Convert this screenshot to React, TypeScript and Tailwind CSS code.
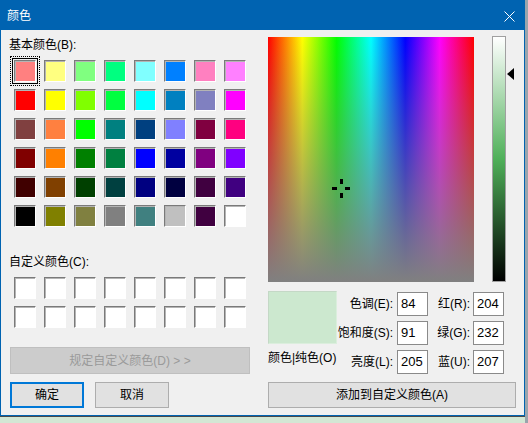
import React from 'react';

const basicColors = [
  ['#FF8080', '#FFFF80', '#80FF80', '#00FF80', '#80FFFF', '#0080FF', '#FF80C0', '#FF80FF'],
  ['#FF0000', '#FFFF00', '#80FF00', '#00FF40', '#00FFFF', '#0080C0', '#8080C0', '#FF00FF'],
  ['#804040', '#FF8040', '#00FF00', '#008080', '#004080', '#8080FF', '#800040', '#FF0080'],
  ['#800000', '#FF8000', '#008000', '#008040', '#0000FF', '#0000A0', '#800080', '#8000FF'],
  ['#400000', '#804000', '#004000', '#004040', '#000080', '#000040', '#400040', '#400080'],
  ['#000000', '#808000', '#808040', '#808080', '#408080', '#C0C0C0', '#400040', '#FFFFFF'],
];

const Swatch: React.FC<{ color: string; selected?: boolean }> = ({ color, selected }) => (
  <div className="relative w-[22px] h-[22px]">
    {selected && (
      <>
        <span className="absolute -inset-[4px] border border-dotted border-black" />
        <span className="absolute -inset-[2px] border border-black" />
      </>
    )}
    <div
      className="w-full h-full border border-t-[#7a7a7a] border-l-[#7a7a7a] border-b-white border-r-white shadow-[inset_1px_1px_0_#b4b4b4]"
      style={{ backgroundColor: color }}
    />
  </div>
);

const Field: React.FC<{ label: string; value: string; labelW: string; gap: string }> = ({ label, value, labelW, gap }) => (
  <div className="flex items-center">
    <span className={`${labelW} text-right text-[12px] leading-[16px]`}>{label}</span>
    <div className={`${gap} w-[31px] h-[24px] bg-white border border-[#8a8a8a] text-[13px] leading-[22px] pl-[3px]`}>{value}</div>
  </div>
);

export default function App() {
  return (
    <div className="w-[528px] h-[423px] bg-[#9aa4ac] overflow-hidden font-['Liberation_Sans','Noto_Sans_CJK_SC',sans-serif] text-black">
      <div className="w-[525px] h-[416px] border border-[#0063b1] bg-[#f0f0f0] flex flex-col">
        {/* title bar */}
        <div className="h-[29px] shrink-0 bg-[#0063b1] flex items-center justify-between pl-[6px] pr-[9px]">
          <span className="text-white text-[12px]">颜色</span>
          <svg width="11" height="11" viewBox="0 0 11 11" className="mt-[1px]">
            <path d="M0.5 0.5 L10.5 10.5 M10.5 0.5 L0.5 10.5" stroke="white" strokeWidth="1" fill="none" />
          </svg>
        </div>

        <div className="flex pl-[8px]">
          {/* left column */}
          <div className="w-[241px] flex flex-col">
            <div className="mt-[7px] h-[17px] text-[12px] leading-[17px]">基本颜色(B):</div>
            <div className="mt-[6px] ml-[5px] grid grid-cols-[repeat(8,22px)] gap-x-[8px] gap-y-[7px]">
              {basicColors.flat().map((c, i) => (
                <Swatch key={i} color={c} selected={i === 0} />
              ))}
            </div>
            <div className="mt-[27px] h-[17px] text-[12px] leading-[17px]">自定义颜色(C):</div>
            <div className="mt-[6px] ml-[5px] grid grid-cols-[repeat(8,22px)] gap-x-[8px] gap-y-[7px]">
              {Array.from({ length: 16 }).map((_, i) => (
                <Swatch key={i} color="#FFFFFF" />
              ))}
            </div>
            <div className="mt-[19px] ml-[1px] w-[240px] h-[27px] bg-[#cccccc] border border-[#bfbfbf] flex items-center justify-center text-[12px] text-[#9a9a9a]">
              规定自定义颜色(D) &gt; &gt;
            </div>
            <div className="mt-[8px] ml-[1px] flex gap-[11px]">
              <button className="w-[74px] h-[26px] bg-[#e1e1e1] border-2 border-[#0078d7] text-[12px]">确定</button>
              <button className="w-[74px] h-[26px] bg-[#e1e1e1] border border-[#adadad] text-[12px]">取消</button>
            </div>
          </div>

          {/* right column */}
          <div className="ml-[18px] flex flex-col pt-[6px]">
            <div className="flex items-start">
              <div className="relative mt-[1px] w-[206px] h-[245px] bg-[linear-gradient(to_bottom,rgba(128,128,128,0),#808080),linear-gradient(to_right,#f00,#ff0,#0f0,#0ff,#00f,#f0f,#f00)]">
                <span className="absolute left-[64px] top-[150px] w-[5px] h-[3px] bg-black" />
                <span className="absolute left-[77px] top-[150px] w-[5px] h-[3px] bg-black" />
                <span className="absolute left-[72px] top-[142px] w-[3px] h-[5px] bg-black" />
                <span className="absolute left-[72px] top-[156px] w-[3px] h-[5px] bg-black" />
              </div>
              <div className="relative ml-[18px] w-[14px] h-[246px] border border-[#a0a0a0] bg-[linear-gradient(to_bottom,#fff,#4fb059,#000)]">
                <svg width="7" height="12" viewBox="0 0 7 12" className="absolute left-[14px] top-[31px]">
                  <polygon points="0,6 7,0 7,12" fill="black" />
                </svg>
              </div>
            </div>

            <div className="mt-[9px] flex">
              <div className="w-[69px] flex flex-col">
                <div className="h-[53px] bg-[#cce8cf] border border-t-[#c4d8c6] border-l-[#c4d8c6] border-b-[#dbeedd] border-r-[#dbeedd]" />
                <div className="mt-[6px] text-[12px] leading-[16px] whitespace-nowrap">颜色|纯色(O)</div>
              </div>
              <div className="mt-[1px] flex flex-col gap-[5px]">
                {[
                  ['色调(E):', '84', '红(R):', '204'],
                  ['饱和度(S):', '91', '绿(G):', '232'],
                  ['亮度(L):', '205', '蓝(U):', '207'],
                ].map(([l1, v1, l2, v2]) => (
                  <div key={l1} className="flex">
                    <Field label={l1} value={v1} labelW="w-[56px]" gap="ml-[4px]" />
                    <Field label={l2} value={v2} labelW="w-[42px]" gap="ml-[3px]" />
                  </div>
                ))}
              </div>
            </div>

            <button className="mt-[8px] w-[248px] h-[26px] bg-[#e1e1e1] border border-[#adadad] text-[12px]">
              添加到自定义颜色(A)
            </button>
          </div>
        </div>
      </div>
      <div className="w-[525px] h-[7px] bg-[#d3e7d4] border-t border-[#4a4a4a]" />
    </div>
  );
}
